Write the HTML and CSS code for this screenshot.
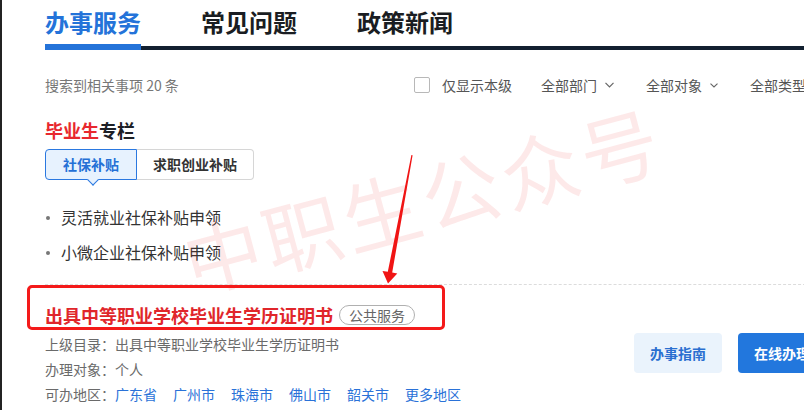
FILE: index.html
```html
<!DOCTYPE html>
<html>
<head>
    <meta charset="UTF-8">
    <title>办事服务</title>
    <link rel="stylesheet" href="styles.css">
</head>
<body>
    <div class="page">
        <div class="content">
            <!-- Top tabs -->
            <nav class="tabs">
                <a class="tab active">办事服务</a>
                <a class="tab">常见问题</a>
                <a class="tab">政策新闻</a>
            </nav>

            <!-- Count + filters -->
            <div class="toolbar">
                <span class="count">搜索到相关事项 20 条</span>
                <div class="filters">
                    <label class="check"><span class="box"></span>仅显示本级</label>
                    <span class="select">全部部门<svg width="9" height="6" viewBox="0 0 9 6"><polyline points="0.5,0.8 4.5,4.8 8.5,0.8" fill="none" stroke="#666" stroke-width="1.2"/></svg></span>
                    <span class="select">全部对象<svg width="8" height="5" viewBox="0 0 8 5"><polyline points="0.5,0.6 4,4 7.5,0.6" fill="none" stroke="#666" stroke-width="1.1"/></svg></span>
                    <span class="select">全部类型<svg width="9" height="6" viewBox="0 0 9 6"><polyline points="0.5,0.8 4.5,4.8 8.5,0.8" fill="none" stroke="#666" stroke-width="1.2"/></svg></span>
                </div>
            </div>

            <!-- Graduate column -->
            <section class="column">
                <h3 class="column-title"><em>毕业生</em>专栏</h3>
                <div class="subtabs">
                    <span class="subtab active">社保补贴</span>
                    <span class="subtab">求职创业补贴</span>
                </div>
                <ul class="links">
                    <li>灵活就业社保补贴申领</li>
                    <li>小微企业社保补贴申领</li>
                </ul>
            </section>

            <!-- Result item -->
            <div class="result">
                <div class="result-info">
                    <h4 class="result-title">出具中等职业学校毕业生学历证明书<span class="tag">公共服务</span></h4>
                    <p class="meta">上级目录：出具中等职业学校毕业生学历证明书</p>
                    <p class="meta">办理对象：个人</p>
                    <p class="meta">可办地区：<a>广东省</a><a>广州市</a><a>珠海市</a><a>佛山市</a><a>韶关市</a><a>更多地区</a></p>
                </div>
                <div class="actions">
                    <button class="btn btn-light">办事指南</button>
                    <button class="btn btn-primary">在线办理</button>
                </div>
            </div>
        </div>

        <!-- overlays: watermark + annotation -->
        <div class="watermark">中职生公众号</div>
        <div class="mark-box"></div>
        <svg class="arrow" width="804" height="410" viewBox="0 0 804 410">
            <polygon points="411.4,155 412.6,155.2 392.2,272.6 397.3,273.6 388,283.5 382.5,270.9 387.8,271.8" fill="#f01414"/>
        </svg>
    </div>
</body>
</html>
```

FILE: styles.css
```css
body {
    margin: 0;
    font-family: "Noto Sans CJK SC", "Noto Sans", sans-serif;
    background: #fff;
    color: #333;
}

.page {
    position: relative;
    height: 410px;
    overflow: hidden;
    padding-left: 45px;
    box-shadow: inset 2px 0 0 #232323;
}

.content {
    width: 781px;
}

/* --- top tabs --- */
.tabs {
    display: flex;
    gap: 60px;
    border-bottom: 4px solid #122030;
}

.tab {
    font-size: 24px;
    font-weight: 700;
    line-height: 32px;
    padding: 6px 0;
    color: #1a1d22;
    border-bottom: 6px solid transparent;
    margin-bottom: -4px;
}

.tab.active {
    color: #2473d9;
    border-bottom-color: #2473d9;
}

/* --- toolbar --- */
.toolbar {
    display: flex;
    align-items: center;
    height: 30px;
    margin-top: 20px;
    font-size: 14px;
}

.count {
    color: #777;
}

.filters {
    margin-left: auto;
    margin-right: 3px;
    display: flex;
    align-items: center;
    color: #555;
}

.check {
    display: flex;
    align-items: center;
    gap: 12px;
    margin-right: 29px;
}

.box {
    width: 14px;
    height: 14px;
    border: 1px solid #b8b8b8;
    border-radius: 2px;
}

.select {
    display: flex;
    align-items: center;
    gap: 8px;
    margin-right: 32px;
}

.select:last-child {
    margin-right: 0;
}

/* --- graduate column --- */
.column-title {
    margin: 17px 0 0;
    font-size: 18px;
    line-height: 26px;
    font-weight: 700;
    color: #1d2026;
}

.column-title em {
    font-style: normal;
    color: #e8282e;
}

.subtabs {
    display: flex;
    margin-top: 6px;
}

.subtab {
    position: relative;
    font-size: 14px;
    font-weight: 700;
    line-height: 29px;
    padding: 0 16px;
    color: #333;
    border: 1px solid #d6d6d6;
    border-left: none;
    border-radius: 0 4px 4px 0;
}

.subtab.active {
    color: #2470d6;
    background: #e7f2fe;
    border: 1px solid #2a78e0;
    border-radius: 4px 0 0 4px;
    padding: 0 17px;
}

/* small pointer under the active sub tab */
.subtab.active::after {
    content: "";
    position: absolute;
    left: 43px;
    bottom: -5px;
    width: 7px;
    height: 7px;
    background: #e7f2fe;
    border-right: 1px solid #2a78e0;
    border-bottom: 1px solid #2a78e0;
    transform: rotate(45deg);
}

.links {
    list-style: none;
    margin: 20px 0 0;
    padding: 0;
}

.links li {
    position: relative;
    font-size: 16px;
    line-height: 35px;
    padding-left: 16px;
    color: #333;
}

.links li::before {
    content: "";
    position: absolute;
    left: 1px;
    top: 16px;
    width: 4px;
    height: 4px;
    border-radius: 50%;
    background: #777;
}

/* --- result item --- */
.result {
    display: flex;
    margin-top: 14px;
    border-top: 1px dashed #dcdcdc;
    padding-top: 17px;
}

.result-info {
    flex: 1;
}

.result-title {
    margin: 0 0 4px;
    display: flex;
    align-items: center;
    font-size: 18px;
    line-height: 26px;
    font-weight: 700;
    color: #e0262b;
}

.tag {
    margin-left: 6px;
    font-size: 14px;
    font-weight: 400;
    line-height: 18px;
    padding: 0 9px;
    color: #666;
    border: 1px solid #b0b0b0;
    border-radius: 10px;
}

.meta {
    margin: 0;
    font-size: 14px;
    line-height: 25px;
    color: #6a6a6a;
}

.meta a {
    color: #2a72d8;
    margin-right: 16px;
}

.actions {
    display: flex;
    gap: 16px;
    margin-top: 31px;
}

.btn {
    width: 88px;
    height: 40px;
    border: none;
    border-radius: 4px;
    font-family: inherit;
    font-size: 14px;
    font-weight: 700;
    cursor: pointer;
}

.btn-light {
    background: #eaf3fc;
    color: #2a6fd0;
}

.btn-primary {
    background: #2277dd;
    color: #fff;
}

/* --- overlays --- */
.watermark {
    position: absolute;
    left: 420px;
    top: 198px;
    transform: translate(-50%, -50%) rotate(-15deg);
    font-size: 78px;
    letter-spacing: 4px;
    padding-left: 4px;
    white-space: nowrap;
    color: rgba(240, 40, 40, 0.1);
    pointer-events: none;
}

.mark-box {
    position: absolute;
    left: 27px;
    top: 285px;
    width: 412px;
    height: 39px;
    border: 3px solid #f41a1a;
    border-radius: 5px;
}

.arrow {
    position: absolute;
    left: 0;
    top: 0;
    pointer-events: none;
}
```
